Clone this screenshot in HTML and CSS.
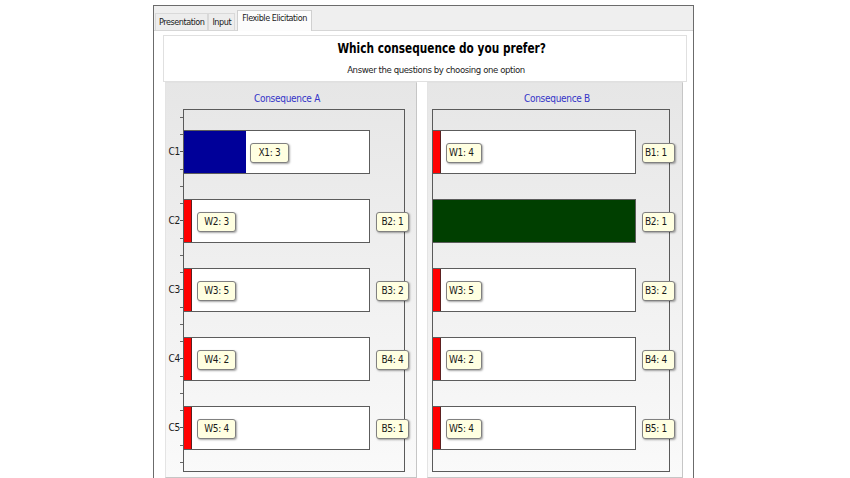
FILE: index.html
```html
<!DOCTYPE html>
<html lang="en">
<head>
   <meta charset="UTF-8">
   <title>Flexible Elicitation</title>
   <link rel="stylesheet" href="styles.css">
</head>
<body>
   <div class="window">
      <div class="tabs">
         <span class="tab">Presentation</span>
         <span class="tab">Input</span>
         <span class="tab active">Flexible Elicitation</span>
      </div>
      <div class="content">
         <div class="header">
            <h1>Which consequence do you prefer?</h1>
            <p>Answer the questions by choosing one option</p>
         </div>
         <div class="panels">
            <!-- Consequence A -->
            <div class="panel panel-a">
               <div class="ptitle">Consequence A</div>
               <div class="chart">
                  <div class="axis">
                     <div class="cat">C1<i></i></div>
                     <div class="cat">C2<i></i></div>
                     <div class="cat">C3<i></i></div>
                     <div class="cat">C4<i></i></div>
                     <div class="cat">C5<i></i></div>
                     <div class="cat end"></div>
                  </div>
                  <div class="plot">
                     <div class="row">
                        <div class="bar"><div class="fill blue"></div><span class="tip">X1: 3</span></div>
                     </div>
                     <div class="row">
                        <div class="bar"><div class="fill red"></div><span class="tip">W2: 3</span></div>
                        <span class="tip side">B2: 1</span>
                     </div>
                     <div class="row">
                        <div class="bar"><div class="fill red"></div><span class="tip">W3: 5</span></div>
                        <span class="tip side">B3: 2</span>
                     </div>
                     <div class="row">
                        <div class="bar"><div class="fill red"></div><span class="tip">W4: 2</span></div>
                        <span class="tip side">B4: 4</span>
                     </div>
                     <div class="row">
                        <div class="bar"><div class="fill red"></div><span class="tip">W5: 4</span></div>
                        <span class="tip side">B5: 1</span>
                     </div>
                  </div>
               </div>
            </div>
            <!-- Consequence B -->
            <div class="panel panel-b">
               <div class="ptitle">Consequence B</div>
               <div class="chart">
                  <div class="plot">
                     <div class="row">
                        <div class="bar"><div class="fill red"></div><span class="tip">W1: 4</span></div>
                        <span class="tip side">B1: 1</span>
                     </div>
                     <div class="row">
                        <div class="bar"><div class="fill green"></div></div>
                        <span class="tip side">B2: 1</span>
                     </div>
                     <div class="row">
                        <div class="bar"><div class="fill red"></div><span class="tip">W3: 5</span></div>
                        <span class="tip side">B3: 2</span>
                     </div>
                     <div class="row">
                        <div class="bar"><div class="fill red"></div><span class="tip">W4: 2</span></div>
                        <span class="tip side">B4: 4</span>
                     </div>
                     <div class="row">
                        <div class="bar"><div class="fill red"></div><span class="tip">W5: 4</span></div>
                        <span class="tip side">B5: 1</span>
                     </div>
                  </div>
               </div>
            </div>
         </div>
      </div>
   </div>
</body>
</html>
```

FILE: styles.css
```css
/** Commun */
* { padding: 0;
    margin: 0;
    box-sizing: border-box;
    font-family: "Liberation Sans Narrow", "DejaVu Sans Condensed", "Liberation Sans", sans-serif;
}
body {
   background-color: white;
   color: #1a1a1a;
   letter-spacing: -0.3px;
}

/** Fenetre */
.window {
   width: 541px;
   height: 473px;
   margin: 5px 0 0 153px;
   border: 1px solid #6b6b6b;
   border-bottom: none;
   background-color: white;
   overflow: hidden;
}
.tabs {
   display: flex;
   align-items: flex-end;
   height: 25px;
   padding-left: 1px;
   background-color: #efefef;
   border-bottom: 1px solid #d6d6d6;
}
.tab {
   height: 17px;
   padding: 0 3px;
   font-size: 9px;
   line-height: 16px;
   letter-spacing: -0.45px;
   border: 1px solid #d9d9d9;
   border-bottom: none;
   background-color: #ededed;
}
.tab.active {
   height: 21px;
   margin: 0 0 -1px 2px;
   padding: 0 4px;
   line-height: 15px;
   background-color: #fcfcfc;
   border-color: #d0d0d0;
}

/** Contenu */
.content {
   padding: 4px 6px 0 9px;
}
.header {
   height: 47px;
   padding-left: 22px;
   border: 1px solid #e0e0e0;
   background-color: white;
   text-align: center;
}
h1 {
   font-size: 14.5px;
   font-weight: bold;
   line-height: 18px;
   margin-top: 3px;
   padding-left: 14px;
   letter-spacing: 0;
   color: black;
   transform: scaleX(0.81);
}
p {
   font-size: 9.5px;
   line-height: 12px;
   margin-top: 7px;
   letter-spacing: -0.4px;
   color: #222;
}
.panels {
   display: flex;
   gap: 10px;
   padding-left: 2px;
}
.panel {
   height: 396px;
   background: linear-gradient(#e6e6e6, #fafafa);
   border: 1px solid;
   border-color: #e2e2e2 #c6c6c6 #c6c6c6 #e4e4e4;
}
.panel-a { width: 252px; }
.panel-b { width: 256px; padding-left: 4px; }
.ptitle {
   padding-top: 9px;
   margin-bottom: 4px;
   font-size: 10px;
   line-height: 13px;
   text-align: center;
   color: #3434c8;
}
.panel-a .ptitle { padding-right: 8px; }
.chart {
   display: flex;
}

/** Axe */
.axis {
   width: 17px;
   padding-top: 8px;
}
.cat {
   display: flex;
   align-items: center;
   justify-content: flex-end;
   height: 69px;
   font-size: 10px;
   background-image: linear-gradient(#666, #666), linear-gradient(#666, #666), linear-gradient(#666, #666);
   background-size: 3px 1px;
   background-repeat: no-repeat;
   background-position: right 0 top 0, right 0 top 17px, right 0 top 52px;
}
.cat i {
   width: 3px;
   height: 1px;
   background-color: #555;
}
.cat.end { height: 2px; }

/** Graphique */
.plot {
   height: 363px;
   padding-top: 20px;
   border: 1px solid #5a5a5a;
}
.panel-a .plot { width: 222px; }
.panel-b .plot { width: 238px; }
.row {
   display: flex;
   align-items: center;
   height: 44px;
   margin-bottom: 25px;
}
.bar {
   display: flex;
   align-items: center;
   flex-shrink: 0;
   height: 44px;
   margin-left: -1px;
   border: 1px solid #5c5c5c;
   background-color: white;
}
.panel-a .bar { width: 187px; }
.panel-b .bar { width: 204px; }
.fill {
   align-self: stretch;
   flex-shrink: 0;
}
.red {
   width: 8px;
   background-color: #ff0000;
   border-right: 1px solid #5c2020;
}
.blue {
   width: 62px;
   background-color: #000099;
}
.green {
   width: 100%;
   background-color: #003f00;
}

/** Etiquettes */
.tip {
   flex-shrink: 0;
   height: 20px;
   width: 39px;
   margin: 2px 0 0 5px;
   padding-top: 1px;
   font-size: 10px;
   line-height: 16px;
   text-align: center;
   color: #1a1a1a;
   background-color: #ffffe1;
   border: 1px solid #808080;
   border-radius: 3px;
   box-shadow: 1px 1px 2px rgba(0,0,0,0.35);
}
.blue + .tip { margin-left: 4px; }
.tip.side {
   width: 33px;
   margin-left: 6px;
}
.panel-b .tip {
   width: 36px;
   padding-left: 2px;
   text-align: left;
}
.panel-b .tip.side {
   width: 33px;
   margin-left: 6px;
}
```
